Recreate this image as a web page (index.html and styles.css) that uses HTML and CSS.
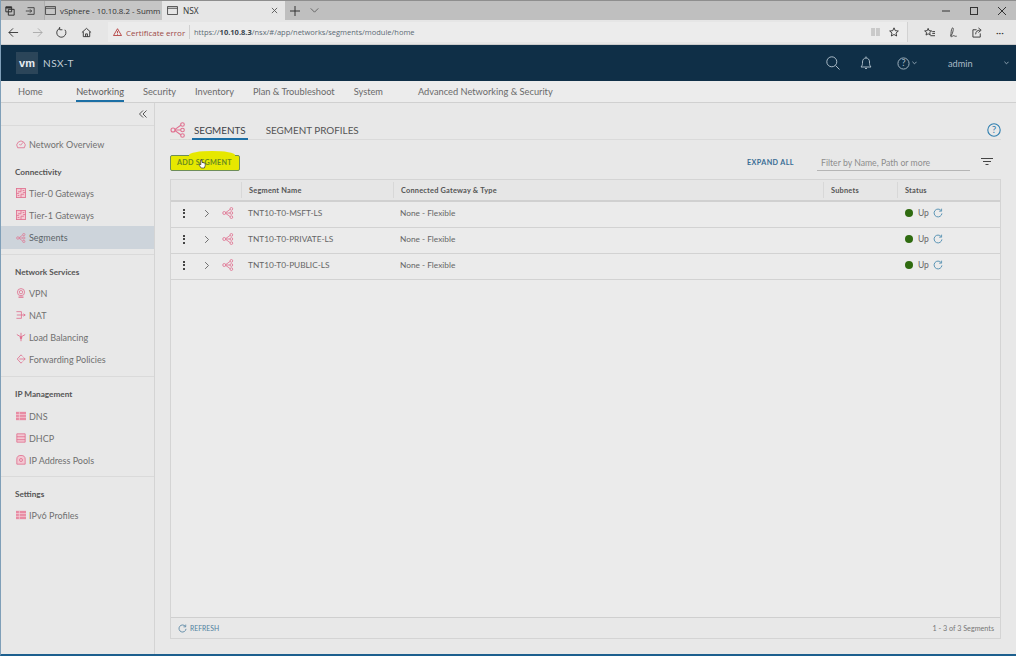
FILE: index.html
```html
<!DOCTYPE html>
<html lang="en">
<head>
<meta charset="utf-8">
<title>NSX</title>
<link rel="stylesheet" href="styles.css">
</head>
<body>
<svg class="defs" width="0" height="0">
  <symbol id="seg" viewBox="0 0 16 16"><g fill="none" stroke="currentColor" stroke-width="1.1"><circle cx="3" cy="8" r="2"/><circle cx="12.5" cy="2.5" r="1.8"/><circle cx="12.5" cy="8" r="1.8"/><circle cx="12.5" cy="13.5" r="1.8"/><path d="M5 7.400 10.800 3.200M5 8h5.700M5 8.600l5.800 4.200"/></g></symbol>
  <symbol id="gw" viewBox="0 0 12 12"><g fill="none" stroke="currentColor" stroke-width="1"><rect x=".5" y=".5" width="11" height="11" fill="#f3c9d3"/><path d="M6 .5v4H2.500M6 11.500v-4h3.500M.5 6.500h3M11.500 5.500h-3M8 3h2M2 9h2"/></g></symbol>
  <symbol id="srv" viewBox="0 0 12 10"><rect width="12" height="10" fill="#e88ba3"/><path d="M0 3.300h12M0 6.600h12M4 0v10" stroke="#f5dbe1" stroke-width=".8"/></symbol>
  <symbol id="refresh" viewBox="0 0 12 12"><path d="M9.800 3.200A4.700 4.700 0 1 0 10.700 6.500" fill="none" stroke="currentColor" stroke-width="1.100"/><path d="M10.300 .8v3H7.300" fill="none" stroke="currentColor" stroke-width="1"/></symbol>
  <symbol id="chev" viewBox="0 0 8 12"><path d="M1.500 1.500 6 6l-4.500 4.500" fill="none" stroke="currentColor" stroke-width="1.100"/></symbol>
</svg>
<div class="app">
  <div class="tabstrip">
    <div class="tabtools">
      <svg class="ic14" viewBox="0 0 12 12"><path d="M1 1h7v6H1zM4 4h7v7H4z" fill="none" stroke="#333" stroke-width="1.200"/><path d="M1 1h7v2H1z" fill="#333"/></svg>
      <svg class="ic14" viewBox="0 0 12 12"><path d="M3 2h8v8H3M3 6h5M6 4l2 2-2 2M1 6h2" fill="none" stroke="#333"/></svg>
    </div>
    <div class="tab inactive">
      <svg class="tabicon" viewBox="0 0 12 10"><path d="M.5.5h11v9H.5zM.5 2.500h11" fill="none" stroke="#444"/></svg>
      <span>vSphere - 10.10.8.2 - Summ</span>
    </div>
    <div class="tab active">
      <svg class="tabicon" viewBox="0 0 12 10"><path d="M.5.5h11v9H.5zM.5 2.500h11" fill="none" stroke="#444"/></svg>
      <span class="tabname">NSX</span>
      <svg class="tabx" viewBox="0 0 8 8"><path d="M1 1l6 6M7 1 1 7" stroke="#555"/></svg>
    </div>
    <svg class="newtab" viewBox="0 0 10 10"><path d="M5 0v10M0 5h10" stroke="#333"/></svg>
    <svg class="tabmenu" viewBox="0 0 10 6"><path d="M.5.5 5 5 9.500.5" fill="none" stroke="#555"/></svg>
    <div class="winctl">
      <svg class="wc" viewBox="0 0 10 10"><path d="M1 5h8" stroke="#333"/></svg>
      <svg class="wc" viewBox="0 0 10 10"><rect x="1.500" y="1.500" width="7" height="7" fill="none" stroke="#333"/></svg>
      <svg class="wc" viewBox="0 0 10 10"><path d="M1 1l8 8M9 1 1 9" stroke="#333"/></svg>
    </div>
  </div>
  <div class="toolbar">
    <svg class="nav-ic" viewBox="0 0 12 12"><path d="M11 6H1M5.500 1.500 1 6l4.500 4.500" fill="none" stroke="#333"/></svg>
    <svg class="nav-ic" viewBox="0 0 12 12"><path d="M1 6h10M6.500 1.500 11 6l-4.500 4.500" fill="none" stroke="#aaa"/></svg>
    <svg class="nav-ic" viewBox="0 0 12 12"><path d="M9.700 3A5 5 0 1 1 4 1.500M4 0v3h3" fill="none" stroke="#333"/></svg>
    <svg class="nav-ic" viewBox="0 0 12 12"><path d="M1 6l5-4.500L11 6M2.500 5v5.500h7V5M5 10.500V7.500h2v3" fill="none" stroke="#333"/></svg>
    <div class="addr">
      <div class="cert">
        <svg class="warn" viewBox="0 0 10 9"><path d="M5 .8 9.500 8.500H.5zM5 3.500v2.500M5 6.800v.8" fill="none" stroke="#b23a3a"/></svg>
        <span>Certificate error</span>
      </div>
      <div class="url">https://<b>10.10.8.3</b>/nsx/#/app/networks/segments/module/home</div>
      <svg class="readview" viewBox="0 0 10 9"><path d="M0 0h10v9H0z" fill="#c9c9c9"/><path d="M5 0v9" stroke="#eee"/></svg>
      <svg class="star" viewBox="0 0 12 12"><path d="M6 1l1.500 3.400 3.700.4-2.800 2.400.8 3.600L6 9l-3.200 1.800.8-3.600L.8 4.800l3.700-.4z" fill="none" stroke="#222"/></svg>
    </div>
    <div class="tb-right">
      <svg class="tb-ic" viewBox="0 0 12 12"><path d="M4.500 1.500l1 2.500 2.800.3-2.100 1.800.6 2.700-2.300-1.400-2.300 1.400.6-2.700L.7 4.300 3.500 4zM9 5h3M9 7h3M7 9.500h5" fill="none" stroke="#333"/></svg>
      <svg class="tb-ic" viewBox="0 0 12 12"><path d="M5 1c1.500 0 .5 4-.5 6.500L3 10l.3-3C3.500 4 4 1 5 1zM3 10.500c2 .5 2-1.500 3.500-1 1 .3 1.500 1 3 .5" fill="none" stroke="#444"/></svg>
      <svg class="tb-ic" viewBox="0 0 12 12"><path d="M5 3H1v8h8V7M4 8c0-3 2-4.500 4.500-4.500M7 1l3 2.500L7 6" fill="none" stroke="#333"/></svg>
      <span class="more">···</span>
    </div>
  </div>
  <header class="hdr">
    <div class="logo">vm</div>
    <div class="product">NSX-T</div>
    <div class="hdr-right">
      <svg class="h-search" viewBox="0 0 14 14"><circle cx="5.800" cy="5.800" r="5" fill="none" stroke="#a9bac6"/><path d="M9.500 9.500 13.500 13.500" stroke="#a9bac6"/></svg>
      <svg class="h-bell" viewBox="0 0 12 14"><path d="M1 11c1.500-1.500 1.500-3 1.500-5C2.500 3.500 4 2 6 2s3.500 1.500 3.500 4c0 2 0 3.500 1.500 5zM6 .5V2M5 12.500h2" fill="none" stroke="#a9bac6"/></svg>
      <span class="h-help"><svg viewBox="0 0 14 14"><circle cx="7" cy="7" r="6" fill="none" stroke="#a9bac6"/><text x="7" y="10.200" text-anchor="middle" class="qmark">?</text></svg><svg class="mini" viewBox="0 0 6 4"><path d="M.5.5 3 3 5.500.5" fill="none" stroke="#a9bac6"/></svg></span>
      <span class="user">admin</span>
      <svg class="mini usermini" viewBox="0 0 6 4"><path d="M.5.5 3 3 5.500.5" fill="none" stroke="#a9bac6"/></svg>
    </div>
  </header>
  <nav class="topnav">
    <a class="tn home">Home</a>
    <a class="tn cur">Networking</a>
    <a class="tn">Security</a>
    <a class="tn">Inventory</a>
    <a class="tn">Plan &amp; Troubleshoot</a>
    <a class="tn sys">System</a>
    <a class="tn adv">Advanced Networking &amp; Security</a>
  </nav>
  <div class="body">
    <aside class="side">
      <div class="collapse"><svg viewBox="0 0 8 8"><path d="M4 .5.500 4 4 7.500M7.500.5 4 4l3.500 3.500" fill="none" stroke="#444" stroke-width=".9"/></svg></div>
      <section class="group first">
        <div class="item"><svg class="si" viewBox="0 0 12 12"><path d="M2 10.500a5 5 0 1 1 8 0z" fill="none" stroke="#e0708f"/><path d="M4 6l1.500 1.500L8.500 4" fill="none" stroke="#e0708f"/></svg>Network Overview</div>
      </section>
      <section class="group conn">
        <div class="label">Connectivity</div>
        <div class="item"><svg class="si"><use href="#gw"/></svg>Tier-0 Gateways</div>
        <div class="item"><svg class="si"><use href="#gw"/></svg>Tier-1 Gateways</div>
        <div class="item sel"><svg class="si"><use href="#seg"/></svg>Segments</div>
      </section>
      <section class="group">
        <div class="label">Network Services</div>
        <div class="item"><svg class="si" viewBox="0 0 12 12"><circle cx="6" cy="5" r="4.300" fill="none" stroke="#e0708f"/><circle cx="6" cy="5" r="2" fill="none" stroke="#e0708f"/><path d="M3 11h6" stroke="#e0708f" stroke-width="1.500"/></svg>VPN</div>
        <div class="item"><svg class="si" viewBox="0 0 12 12"><path d="M.5 2h6v8h-6M1 6h10M9 4.500 11 6 9 7.500" fill="none" stroke="#e0708f"/></svg>NAT</div>
        <div class="item"><svg class="si" viewBox="0 0 12 12"><path d="M6 1v10M1 3l5 3 5-3" fill="none" stroke="#e0708f" stroke-width="1.100"/><circle cx="6" cy="7" r="1.500" fill="#e0708f"/></svg>Load Balancing</div>
        <div class="item"><svg class="si" viewBox="0 0 12 12"><path d="M6 1 1.500 6 6 11M4 6h7M9 4l2 2-2 2M6 1l2 2M6 11l2-2" fill="none" stroke="#e0708f"/></svg>Forwarding Policies</div>
      </section>
      <section class="group ipm">
        <div class="label">IP Management</div>
        <div class="item"><svg class="si"><use href="#srv"/></svg>DNS</div>
        <div class="item"><svg class="si" viewBox="0 0 12 12"><path d="M1 1h10v10H1zM1 4.500h10M1 8h10" fill="#f3c9d3" stroke="#e0708f"/></svg>DHCP</div>
        <div class="item"><svg class="si" viewBox="0 0 12 12"><path d="M1 11V5a5 4.500 0 0 1 10 0v6z" fill="#f3c9d3" stroke="#e0708f"/><circle cx="6" cy="6" r="1.800" fill="none" stroke="#e0708f"/></svg>IP Address Pools</div>
      </section>
      <section class="group last">
        <div class="label">Settings</div>
        <div class="item"><svg class="si"><use href="#srv"/></svg>IPv6 Profiles</div>
      </section>
    </aside>
    <main class="main">
      <div class="tabsrow">
        <svg class="pageic"><use href="#seg"/></svg>
        <a class="ptab cur">SEGMENTS</a>
        <a class="ptab">SEGMENT PROFILES</a>
        <svg class="help" viewBox="0 0 14 14"><circle cx="7" cy="7" r="6.200" fill="none" stroke="#2f7fb0" stroke-width="1.100"/><text x="7" y="10.300" text-anchor="middle" class="qblue">?</text></svg>
      </div>
      <div class="actions">
        <button class="add">ADD SEGMENT<svg class="cursor" viewBox="0 0 10 12"><path d="M3.500 1v6L2 6 1.500 7.500l2.500 3.500h4l1-3V5L5 4V1z" fill="#fff" stroke="#222" stroke-width=".8"/></svg></button>
        <a class="expand">EXPAND ALL</a>
        <div class="filter">Filter by Name, Path or more</div>
        <svg class="funnel" viewBox="0 0 12 7"><path d="M0 .5h12M2 3.500h8M4.500 6.500h3" stroke="#444"/></svg>
      </div>
      <div class="tablewrap">
        <div class="row head">
          <div class="c c0"></div>
          <div class="c c1">Segment Name</div>
          <div class="c c2">Connected Gateway &amp; Type</div>
          <div class="c c3">Subnets</div>
          <div class="c c4">Status</div>
        </div>
        <div class="row data">
          <div class="c c0"><span class="kebab"><i></i><i></i><i></i></span><svg class="chev"><use href="#chev"/></svg><svg class="rowic"><use href="#seg"/></svg></div>
          <div class="c c1">TNT10-T0-MSFT-LS</div>
          <div class="c c2">None - Flexible</div>
          <div class="c c3"></div>
          <div class="c c4"><span class="dot"></span>Up<svg class="rf"><use href="#refresh"/></svg></div>
        </div>
        <div class="row data">
          <div class="c c0"><span class="kebab"><i></i><i></i><i></i></span><svg class="chev"><use href="#chev"/></svg><svg class="rowic"><use href="#seg"/></svg></div>
          <div class="c c1">TNT10-T0-PRIVATE-LS</div>
          <div class="c c2">None - Flexible</div>
          <div class="c c3"></div>
          <div class="c c4"><span class="dot"></span>Up<svg class="rf"><use href="#refresh"/></svg></div>
        </div>
        <div class="row data">
          <div class="c c0"><span class="kebab"><i></i><i></i><i></i></span><svg class="chev"><use href="#chev"/></svg><svg class="rowic"><use href="#seg"/></svg></div>
          <div class="c c1">TNT10-T0-PUBLIC-LS</div>
          <div class="c c2">None - Flexible</div>
          <div class="c c3"></div>
          <div class="c c4"><span class="dot"></span>Up<svg class="rf"><use href="#refresh"/></svg></div>
        </div>
        <div class="spacer"></div>
        <div class="foot">
          <a class="refresh"><svg class="rf2"><use href="#refresh"/></svg>REFRESH</a>
          <span class="count">1 - 3 of 3 Segments</span>
        </div>
      </div>
    </main>
  </div>
</div>
</body>
</html>
```
FILE: styles.css
```css
* { box-sizing: border-box; }
html, body { margin: 0; padding: 0; width: 1016px; height: 656px; overflow: hidden; }
body { font-family: "Lato", "Open Sans", sans-serif; color: #666; background: #e8e8e8; }
.defs { position: absolute; }
.app { width: 1016px; height: 656px; display: flex; flex-direction: column; border-bottom: 2px solid #1c5f8e; border-left: 1px solid #7f9fb8; }

.tabstrip { height: 20px; flex: none; display: flex; align-items: center; background: #bfbfbf; border-top: 1px solid #8e8e8e; }
.tabtools { display: flex; gap: 10px; width: 43px; padding-left: 4px; flex: none; }
.ic14 { width: 10px; height: 10px; }
.tab { height: 19px; display: flex; align-items: center; color: #333; flex: none; }
.tab.inactive { width: 118px; gap: 4px; padding-left: 0; background: #c6c6c6; border-left: 1px solid #adadad; white-space: nowrap; overflow: hidden; font-family: "Open Sans", sans-serif; font-size: 7.900px; }
.tab.active { width: 123px; background: #e6e6e6; padding-left: 5px; gap: 5px; font-family: "Open Sans", sans-serif; font-size: 8.300px; }
.tabname { flex: 1; }
.tabicon { width: 11px; height: 9px; flex: none; }
.tabx { width: 7px; height: 7px; margin-right: 7px; }
.newtab { width: 10px; height: 10px; margin-left: 5px; }
.tabmenu { width: 9px; height: 5px; margin-left: 10px; }
.winctl { margin-left: auto; display: flex; gap: 18px; padding-right: 9px; }
.wc { width: 10px; height: 10px; }

.toolbar { height: 25px; flex: none; display: flex; align-items: center; background: #e6e6e6; padding-left: 7px; border-bottom: 1px solid #ccc; }
.nav-ic { width: 11px; height: 11px; margin-right: 13px; flex: none; }
.nav-ic:nth-child(3) { margin-right: 14px; }
.nav-ic:nth-child(4) { margin-right: 14px; }
.addr { width: 800px; height: 20px; flex: none; margin-left: 2px; background: #ececec; border-right: 1px solid #d2d2d2; display: flex; align-items: center; font-family: "Open Sans", sans-serif; font-size: 7.500px; }
.cert { display: flex; align-items: center; gap: 4px; width: 82px; padding-left: 5px; color: #9c4a48; height: 14px; border-right: 1px solid #d0d0d0; font-size: 8px; white-space: nowrap; flex: none; }
.warn { width: 9px; height: 8px; flex: none; }
.url { flex: 1; padding-left: 4px; color: #5b6a75; white-space: nowrap; }
.url b { color: #3a4650; font-weight: 700; }
.readview { width: 9px; height: 8px; margin-right: 9px; }
.star { width: 10px; height: 10px; margin-right: 8px; }
.tb-right { flex: 1; display: flex; align-items: center; gap: 13px; padding-left: 16px; }
.tb-ic { width: 11px; height: 11px; flex: none; }
.more { font-size: 10px; color: #333; }

.hdr { height: 36px; flex: none; display: flex; align-items: center; background: #0f2f47; padding-left: 15px; }
.logo { width: 22px; height: 22px; background: #2b4559; color: #e6edf2; font-family: "Liberation Sans", sans-serif; font-weight: 700; font-size: 11px; display: flex; align-items: center; justify-content: center; }
.product { margin-left: 5px; color: #c3ced6; font-size: 10px; letter-spacing: .5px; }
.hdr-right { margin-left: auto; display: flex; align-items: center; }
.h-search { width: 14px; height: 14px; margin-right: 20px; }
.h-bell { width: 12px; height: 14px; margin-right: 25px; }
.h-help { display: flex; align-items: center; gap: 2px; width: 51px; }
.h-help svg:first-child { width: 13px; height: 13px; }
.qmark { font-size: 10px; fill: #a9bac6; font-family: "Lato", sans-serif; }
.qblue { font-size: 10px; fill: #2f7fb0; font-family: "Lato", sans-serif; }
.mini { width: 5px; height: 4px; }
.user { color: #a9bac6; font-size: 9.200px; width: 56px; }
.usermini { margin-right: 7px; }

.topnav { height: 22px; flex: none; display: flex; align-items: stretch; background: #ececec; border-bottom: 1px solid #d0d0d0; font-size: 9.250px; padding-left: 17px; }
.tn { display: flex; align-items: center; margin-right: 19px; color: #6a6a6a; border-bottom: 2px solid transparent; height: 21px; white-space: nowrap; padding-top: 1px; }
.tn.home { margin-right: 33.500px; }
.tn.sys { margin-right: 35px; }
.tn.cur { color: #5c5c5c; border-bottom-color: #1c6fa5; }

.body { flex: 1; display: flex; min-height: 0; }
.side { width: 154px; flex: none; background: #e8e8e8; border-right: 1px solid #d4d4d4; font-size: 9px; }
.collapse { height: 23px; display: flex; justify-content: flex-end; align-items: center; padding-right: 7px; border-bottom: 1px solid #dadada; }
.collapse svg { width: 8px; height: 8px; }
.group { border-bottom: 1px solid #dadada; padding-bottom: 6px; padding-top: 6px; }
.group.first { border-bottom: none; padding: 7px 0 0; }
.group.conn { padding-bottom: 5px; }
.group.ipm { padding-bottom: 5px; }
.group.ipm .label { height: 22px; }
.group.last { border-bottom: none; }
.label { height: 21px; padding-left: 14px; display: flex; align-items: center; font-size: 8.200px; font-weight: 700; color: #555; }
.item { height: 22px; display: flex; align-items: center; padding-left: 15px; color: #707070; white-space: nowrap; }
.item.sel { background: #cdd4db; height: 23px; color: #5c6469; }
.si { width: 10px; height: 10px; flex: none; margin-right: 3px; color: #e0708f; }

.main { flex: 1; background: #e8e8e8; padding: 0 15px 0 15px; display: flex; flex-direction: column; min-width: 0; }
.tabsrow { height: 37px; flex: none; display: flex; align-items: flex-start; border-bottom: 1px solid #dadada; position: relative; padding-top: 19px; }
.pageic { width: 16px; height: 16px; color: #e0708f; margin-right: 6px; flex: none; }
.ptab { font-size: 9.900px; color: #555; height: 18px; padding: 0 2px; display: flex; align-items: center; margin-right: 16px; white-space: nowrap; border-bottom: 2px solid transparent; }
.ptab.cur { color: #3f4448; border-bottom-color: #1c6fa5; }
.help { position: absolute; right: 0; top: 20px; width: 14px; height: 14px; }

.actions { height: 39px; flex: none; display: flex; align-items: center; padding-top: 6px; }
.add { position: relative; width: 70px; height: 16px; padding: 0 0 0 6px; text-align: left; background: #e6e800; border: 1px solid #6d8d5a; border-radius: 2px; font: 700 7.200px "Lato", sans-serif; color: #6a8a20; letter-spacing: .3px; }
.add::before { content: ""; position: absolute; left: 18px; top: -5px; width: 46px; height: 8px; background: #e6e800; border-radius: 50% 50% 0 0; z-index: 0; }
.cursor { position: absolute; left: 27px; top: 3px; width: 8px; height: 10px; }
.expand { margin-left: auto; font-size: 7.200px; font-weight: 700; color: #396d94; letter-spacing: .4px; }
.filter { width: 153px; margin-left: 23px; height: 16px; margin-top: 1px; padding-left: 4px; border-bottom: 1px solid #b5b5b5; font-size: 8.700px; color: #8d8d8d; display: flex; align-items: center; }
.funnel { width: 12px; height: 7px; margin-left: 11px; margin-right: 8px; margin-bottom: 2px; }

.tablewrap { flex: none; height: 460px; border: 1px solid #d4d4d4; display: flex; flex-direction: column; background: #ebebeb; }
.row { display: flex; flex: none; border-bottom: 1px solid #d2d2d2; }
.row.head { height: 22px; background: #e6e6e6; font-size: 7.400px; font-weight: 700; color: #555; border-bottom: 2px solid #d0d0d0; letter-spacing: .2px; }
.row.head .c + .c { border-left: 1px solid #d8d8d8; margin: 2px 0; }
.row.data { height: 26px; font-size: 8.300px; color: #666; }
.row.data .c { padding-bottom: 3px; }
.c { display: flex; align-items: center; padding-left: 7px; }
.c0 { width: 70px; padding-left: 0; position: relative; }
.c1 { width: 152px; }
.c2 { width: 430px; }
.c3 { width: 74px; }
.c4 { flex: 1; }
.row.data .c0 { padding-left: 0; }
.row.data .c4 { padding-left: 8px; font-size: 8.500px; }
.kebab { display: flex; flex-direction: column; gap: 1.500px; margin-left: 12px; }
.kebab i { width: 2px; height: 2px; background: #444; display: block; }
.chev { width: 6px; height: 9px; margin-left: 19px; color: #555; }
.rowic { width: 12px; height: 12px; margin-left: 12px; color: #e0708f; }
.dot { width: 8px; height: 8px; border-radius: 50%; background: #2f6b10; margin-right: 5px; }
.rf { width: 10px; height: 10px; margin-left: 4px; color: #4f8db0; }
.spacer { flex: 1; }
.foot { height: 21px; flex: none; border-top: 1px solid #cfcfcf; display: flex; align-items: center; justify-content: space-between; padding: 0 6px 0 7px; background: #e8e8e8; }
.refresh { display: flex; align-items: center; gap: 3px; font-size: 6.800px; color: #4f7f9f; }
.rf2 { width: 9px; height: 9px; color: #4f7f9f; }
.count { font-size: 7.200px; color: #777; }
```
